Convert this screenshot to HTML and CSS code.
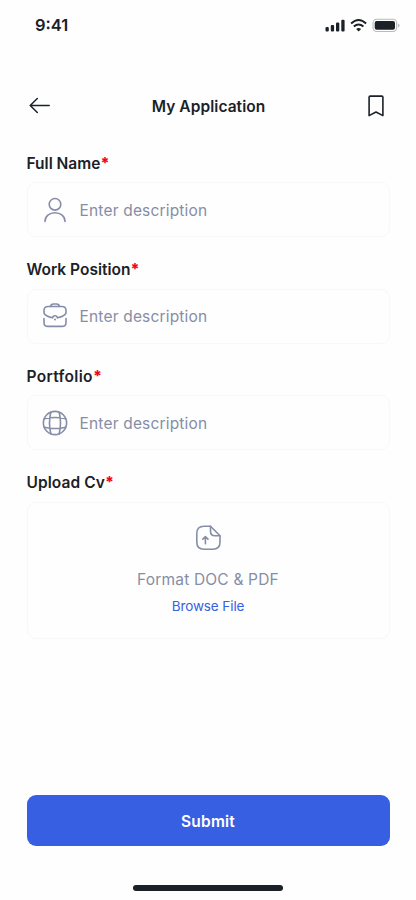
FILE: index.html
```html
<!DOCTYPE html>
<html lang="en">
<head>
<meta charset="utf-8">
<meta name="viewport" content="width=device-width, initial-scale=1">
<title>My Application</title>
<link rel="stylesheet" href="styles.css">
</head>
<body>
<main class="screen">
  <div class="status">
    <span class="time">9:41</span>
    <svg class="status-icons" width="76" height="16" viewBox="0 0 76 16" aria-hidden="true">
      <g fill="#1b2126">
        <rect x="1.5" y="10" width="3.3" height="4.5" rx="1.1"/>
        <rect x="6.8" y="8" width="3.3" height="6.5" rx="1.1"/>
        <rect x="12" y="5.5" width="3.3" height="9" rx="1.1"/>
        <rect x="17.3" y="2.7" width="3.3" height="11.8" rx="1.1"/>
        <path d="M34.6 14.4l-2.5-2.5q2.5-2 5 0z"/>
        <rect x="50.7" y="4" width="20.3" height="8.8" rx="2"/>
      </g>
      <g fill="none" stroke="#1b2126" stroke-width="2">
        <path d="M27.1 6.500q7.5-7 15 0"/>
        <path d="M29.8 9.600q4.8-4.300 9.600 0"/>
      </g>
      <rect x="49" y="2.300" width="23.700" height="12.200" rx="3.700" fill="none" stroke="#b8babb" stroke-width="1.100"/>
      <path d="M74.200 6.500v4q1.300-.6 1.300-2t-1.300-2z" fill="#b0b2b4"/>
    </svg>
  </div>

  <header class="header">
    <svg width="22" height="18" viewBox="0 0 22 18" fill="none" stroke="#1b2126" stroke-width="1.5" stroke-linecap="round" stroke-linejoin="round" aria-hidden="true">
      <path d="M20.2 8.500H1.200M8.300 1.500 1.200 8.500l7.100 7"/>
    </svg>
    <h1 class="title">My Application</h1>
    <svg width="16" height="22" viewBox="0 0 16 22" fill="none" stroke="#1b2126" stroke-width="1.6" stroke-linejoin="round" aria-hidden="true">
      <path d="M1.100 2.200q0-1.100 1.100-1.100h11.600q1.100 0 1.100 1.100v18.400L8 17l-6.900 3.600z"/>
    </svg>
  </header>

  <form class="form">
    <div class="group">
      <div class="label"><span>Full Name</span><span class="star">*</span></div>
      <div class="field">
        <svg class="icon" width="28" height="28" viewBox="0 0 28 28" aria-hidden="true">
          <circle cx="14" cy="8.300" r="5.800"/>
          <path d="M4 25.500c0-5.200 4.300-8.800 10-8.800s10 3.600 10 8.800"/>
        </svg>
        <span class="placeholder">Enter description</span>
      </div>
    </div>
    <div class="group">
      <div class="label"><span>Work Position</span><span class="star">*</span></div>
      <div class="field">
        <svg class="icon" width="28" height="28" viewBox="0 0 28 28" aria-hidden="true">
          <path d="M9.800 4.500C9.800 2.500 10.800 2 12.500 2h3c1.700 0 2.700.5 2.700 2.500"/>
          <path d="M11.600 15.700C8.500 15.400 3 13.300 3 10.500v-2c0-2.600 1.400-4 4-4h14c2.600 0 4 1.400 4 4v2c0 2.800-5.500 4.900-8.600 5.200"/>
          <path d="M11.600 15.700c.4-2.700 4.400-2.700 4.800 0M3 16.500v3.900c0 2.600 1.400 4 4 4h14c2.600 0 4-1.400 4-4v-3.900"/>
          <circle class="dot" cx="14" cy="17.500" r="1"/>
        </svg>
        <span class="placeholder">Enter description</span>
      </div>
    </div>
    <div class="group">
      <div class="label"><span class="portfolio-label">Portfolio</span><span class="star">*</span></div>
      <div class="field">
        <svg class="icon" width="28" height="28" viewBox="0 0 28 28" aria-hidden="true">
          <circle cx="14" cy="14" r="11.600"/>
          <path d="M9.800 3.300q-2.600 10.700 0 21.400M18.200 3.300q2.600 10.700 0 21.400M3.300 9.800q10.700-2.600 21.400 0M3.300 18.200q10.700 2.600 21.400 0"/>
        </svg>
        <span class="placeholder">Enter description</span>
      </div>
    </div>
    <div class="group">
      <div class="label"><span class="upload-label">Upload Cv</span><span class="star">*</span></div>
      <div class="upload">
        <svg class="icon" width="28" height="28" viewBox="0 0 28 28" aria-hidden="true">
          <path d="M26 11.700v6.300c0 5-2.200 7.200-7.200 7.200H10c-5 0-7.200-2.200-7.200-7.200V9.500c0-5 2.200-7.200 7.200-7.200h6.500z"/>
          <path d="M16.500 2.300v4.900c0 3.300 1.200 4.500 4.500 4.500h5"/>
          <path d="M11.400 19.700v-6.900M8.800 15.200l2.600-2.500 2.600 2.500"/>
        </svg>
        <span class="format">Format DOC &amp; PDF</span>
        <a class="browse">Browse File</a>
      </div>
    </div>
  </form>

  <button class="submit" type="button">Submit</button>
  <div class="home"></div>
</main>
</body>
</html>
```
FILE: styles.css
```css
* { box-sizing: border-box; }
body {
  margin: 0;
  background: #fefefe;
  font-family: Inter, "Liberation Sans", sans-serif;
  color: #1b2126;
}
.screen {
  width: 416px;
  height: 900px;
  display: flex;
  flex-direction: column;
  padding: 15px 26.500px 9px;
}
.status {
  height: 20px;
  display: flex;
  align-items: center;
  justify-content: space-between;
  margin: 0 -10px 0 8.500px;
}
.time { font-size: 16.500px; font-weight: 600; line-height: 20px; }
.header {
  height: 24px;
  margin: 59px 5.500px 0 2.500px;
  display: flex;
  align-items: center;
  justify-content: space-between;
}
.header svg, .status svg, .icon { flex: none; display: block; }
.title {
  margin: 2px 2px 0 0;
  font-size: 15.500px;
  font-weight: 600;
  line-height: 24px;
  letter-spacing: 0.070px;
}
.form {
  margin-top: 33px;
  display: flex;
  flex-direction: column;
  gap: 20px;
}
.label {
  height: 20px;
  margin-bottom: 11.400px;
  font-size: 15.500px;
  font-weight: 600;
  line-height: 26px;
  white-space: nowrap;
}
.portfolio-label { letter-spacing: 0.330px; }
.upload-label { letter-spacing: 0.080px; }
.star { color: #f5001d; font-weight: 800; }
.field {
  height: 55px;
  display: flex;
  align-items: center;
  gap: 10.500px;
  padding-left: 13.500px;
  border: 1.500px solid #f8f8f9;
  border-radius: 9px;
}
.icon {
  fill: none;
  stroke: #868da6;
  stroke-width: 1.600;
  stroke-linecap: round;
  stroke-linejoin: round;
}
.dot { fill: #868da6; stroke: none; }
.placeholder, .format {
  font-size: 15.500px;
  line-height: 24px;
  letter-spacing: 0.180px;
  color: #868da6;
}
.placeholder { padding-top: 2px; }
.upload {
  height: 137.500px;
  display: flex;
  flex-direction: column;
  align-items: center;
  padding-top: 21px;
  border: 1.500px solid #f8f8f9;
  border-radius: 9px;
}
.format { margin-top: 16px; }
.browse { margin-top: 4px; font-size: 13.500px; line-height: 20px; letter-spacing: -0.100px; color: #375fe4; }
.submit {
  height: 51px;
  margin-top: auto;
  padding: 2px 0 0;
  border: 0;
  border-radius: 9px;
  background: #375fe2;
  color: #fff;
  font: 600 15.500px/24px Inter, "Liberation Sans", sans-serif;
  letter-spacing: 0.200px;
}
.home {
  width: 150px;
  height: 6px;
  margin: 39px auto 0;
  border-radius: 3px;
  background: #1b2126;
}
```
